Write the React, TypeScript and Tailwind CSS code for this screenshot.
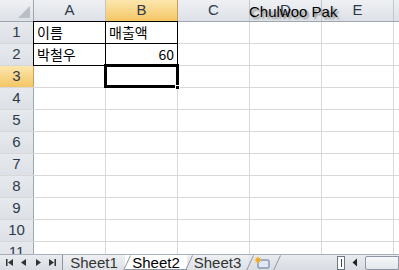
import React from "react";

const cols = ["A", "B", "C", "D", "E"];
const rows = [1, 2, 3, 4, 5, 6, 7, 8, 9, 10, 11];

const cellText: Record<string, { text: string; right?: boolean }> = {
  A1: { text: "이름" },
  B1: { text: "매출액" },
  A2: { text: "박철우" },
  B2: { text: "60", right: true },
};

function NavArrows() {
  return (
    <div className="flex h-full w-[62px] items-center justify-around px-[2px]">
      <svg width="9" height="9" viewBox="0 0 9 9">
        <rect x="1" y="1" width="1.5" height="7" fill="#333" />
        <path d="M8 1 L3 4.5 L8 8 Z" fill="#333" />
      </svg>
      <svg width="9" height="9" viewBox="0 0 9 9">
        <path d="M7 1 L2 4.5 L7 8 Z" fill="#333" />
      </svg>
      <svg width="9" height="9" viewBox="0 0 9 9">
        <path d="M2 1 L7 4.5 L2 8 Z" fill="#333" />
      </svg>
      <svg width="9" height="9" viewBox="0 0 9 9">
        <path d="M1 1 L6 4.5 L1 8 Z" fill="#333" />
        <rect x="6.5" y="1" width="1.5" height="7" fill="#333" />
      </svg>
    </div>
  );
}

// slanted tab edge
function Slant() {
  return (
    <svg className="absolute right-[-6px] top-0 z-10" width="8" height="16" viewBox="0 0 8 16">
      <path d="M0.5 15.5 L7.5 0.5" stroke="#8d96a2" strokeWidth="1" fill="none" />
    </svg>
  );
}

export default function App() {
  return (
    <div className="relative h-[270px] w-[399px] overflow-hidden bg-white font-['Liberation_Sans','Noto_Sans_CJK_KR',sans-serif]">
      {/* column header */}
      <div className="flex h-[22px] border-b border-[#9ea6b0] bg-gradient-to-b from-[#eef0f3] to-[#dde1e7]">
        <div className="relative w-[34px] shrink-0 border-r border-[#9ea6b0]">
          <svg className="absolute right-[3px] bottom-[3px]" width="12" height="12" viewBox="0 0 12 12">
            <path d="M12 0 L12 12 L0 12 Z" fill="#b9bec6" />
          </svg>
        </div>
        {cols.map((c) => (
          <div
            key={c}
            className={`flex w-[72px] shrink-0 items-center justify-center border-r text-[15px] text-[#2e3a4a] ${
              c === "B"
                ? "border-[#c9a24a] bg-gradient-to-b from-[#fce6ad] to-[#f4c663]"
                : "border-[#c2c7ce]"
            }`}
          >
            {c}
          </div>
        ))}
        <div className="flex-1" />
      </div>

      {/* rows */}
      {rows.map((r) => (
        <div key={r} className="flex h-[22px] border-b border-[#d8d8d8]">
          <div
            className={`flex w-[34px] shrink-0 items-center justify-center border-r text-[15px] text-[#2e3a4a] ${
              r === 3
                ? "border-[#c9a24a] bg-gradient-to-b from-[#fce6ad] to-[#f4c663]"
                : "border-[#9ea6b0] bg-gradient-to-b from-[#e6e9ed] to-[#dde1e7]"
            }`}
          >
            {r}
          </div>
          {cols.map((c) => {
            const v = cellText[c + r];
            return (
              <div
                key={c}
                className={`flex w-[72px] shrink-0 items-center border-r border-[#d8d8d8] px-[3px] font-['Noto_Sans_CJK_KR',sans-serif] text-[14px] text-black ${
                  v?.right ? "justify-end" : "justify-start"
                }`}
              >
                {v?.text}
              </div>
            );
          })}
          <div className="flex-1" />
        </div>
      ))}

      {/* black borders around A1:B2 */}
      <div className="pointer-events-none absolute left-[33px] top-[21px] h-[45px] w-[145px] border border-black" />
      <div className="pointer-events-none absolute left-[105px] top-[21px] h-[45px] w-px bg-black" />
      <div className="pointer-events-none absolute left-[33px] top-[43px] h-px w-[145px] bg-black" />

      {/* selection B3 */}
      <div className="pointer-events-none absolute left-[104px] top-[64px] h-[24px] w-[75px] border-[3px] border-black" />
      <div className="pointer-events-none absolute left-[175px] top-[85px] h-[5px] w-[5px] border border-white bg-black" />

      {/* collaborator name */}
      <div className="pointer-events-none absolute left-[249px] top-[1px] text-[15px] text-black [text-shadow:2px_2px_2px_#8a8a8a]">
        Chulwoo Pak
      </div>

      {/* sheet tabs */}
      <div className="absolute bottom-0 left-0 flex h-[16px] w-full items-stretch border-t border-[#a9b0ba] bg-gradient-to-b from-[#e8ebef] to-[#d9dde3]">
        <NavArrows />
        <div className="relative flex w-[63px] items-center justify-center border-l border-[#8d96a2] bg-gradient-to-b from-[#eef0f3] to-[#dde1e6] text-[15px] leading-none text-[#333]">
          Sheet1
          <Slant />
        </div>
        <div className="relative flex w-[62px] items-center justify-center border-b border-[#8d96a2] bg-white text-[15px] leading-none text-black">
          Sheet2
          <Slant />
        </div>
        <div className="relative flex w-[61px] items-center justify-center bg-gradient-to-b from-[#eef0f3] to-[#dde1e6] text-[15px] leading-none text-[#333]">
          Sheet3
          <Slant />
        </div>
        <div className="relative flex w-[27px] items-center justify-center">
          <svg width="16" height="13" viewBox="0 0 16 13">
            <rect x="4" y="4" width="11" height="8" rx="1" fill="#dfe8f3" stroke="#5a7594" />
            <circle cx="4" cy="4" r="2.4" fill="#f7c33a" />
            <path d="M4 0.5 V7.5 M0.5 4 H7.5 M1.5 1.5 L6.5 6.5 M6.5 1.5 L1.5 6.5" stroke="#f0a020" strokeWidth="0.8" />
          </svg>
          <Slant />
        </div>
        <div className="flex-1" />
        <div className="flex items-center gap-[7px]">
          <div className="flex h-[14px] w-[8px] items-center justify-center border border-[#6b7785] bg-white">
            <div className="h-[8px] w-px bg-[#444]" />
          </div>
          <svg width="6" height="9" viewBox="0 0 6 9">
            <path d="M5 0.5 L0.5 4.5 L5 8.5 Z" fill="#222" />
          </svg>
          <div className="h-[14px] w-[34px] rounded-l-[2px] border border-[#8d96a2] bg-gradient-to-b from-[#f6f7f9] to-[#e2e6eb]" />
        </div>
      </div>
    </div>
  );
}
